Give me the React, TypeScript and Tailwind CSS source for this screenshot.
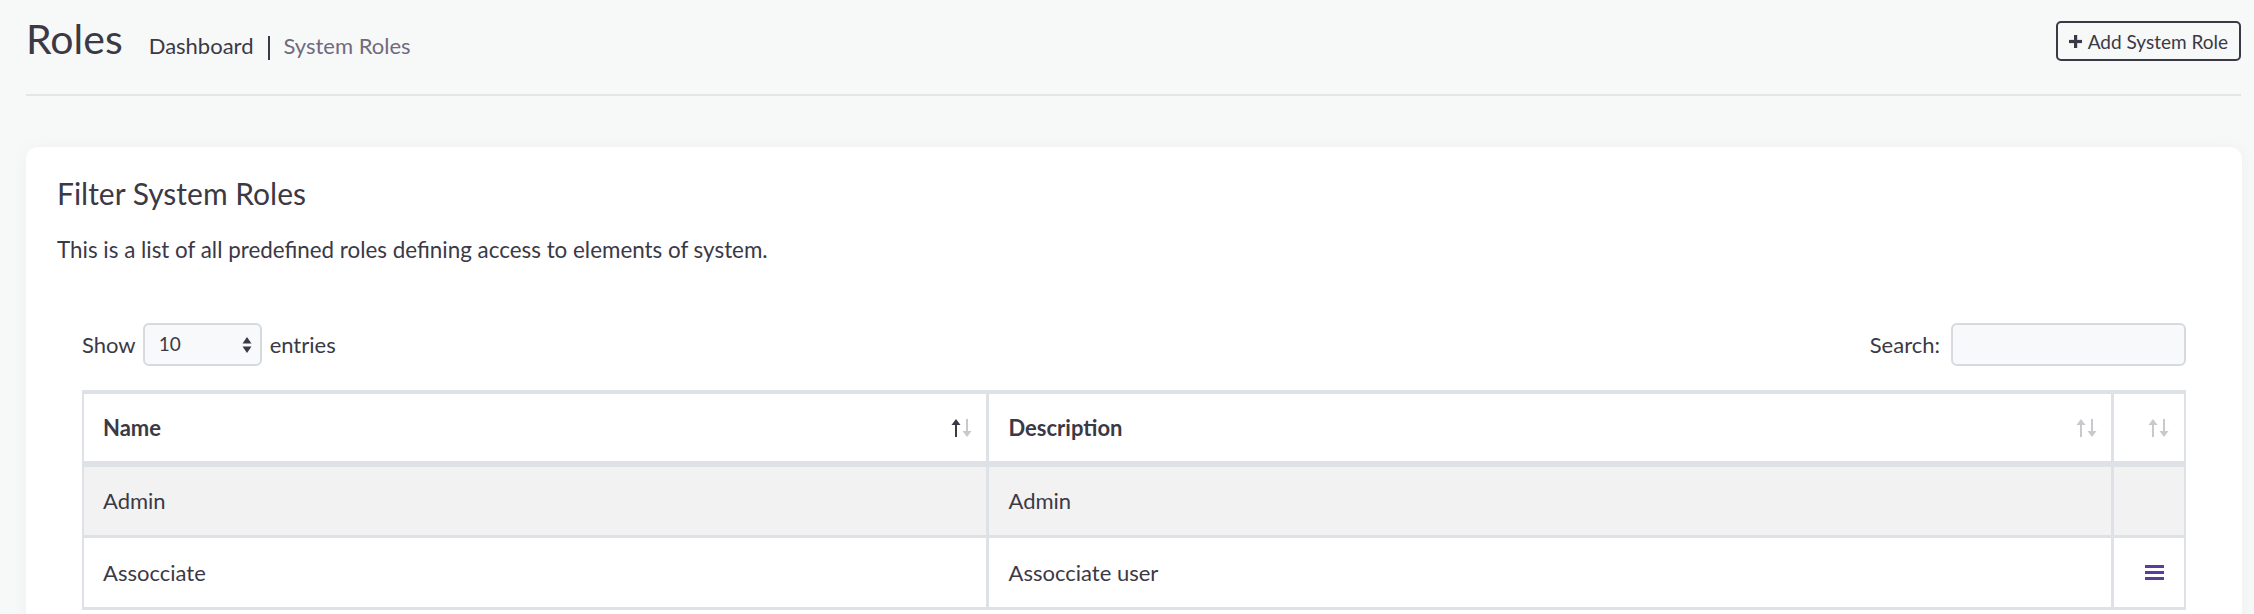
import React from 'react';

// Sort arrows used in the DataTables header (up dark when active)
const SortIcon: React.FC<{ active?: boolean }> = ({ active }) => (
    <svg width="22" height="18" viewBox="0 0 22 18" className="shrink-0">
        <g fill={active ? '#3b3946' : '#c9c9cd'}>
            <rect x="4" y="4" width="2" height="14" />
            <polygon points="5,0 9.5,6 0.5,6" />
        </g>
        <g fill="#c9c9cd">
            <rect x="15" y="0" width="2" height="14" />
            <polygon points="16,18 20.5,12 11.5,12" />
        </g>
    </svg>
);

const rows = [
    { name: 'Admin', description: 'Admin', actions: false },
    { name: 'Assocciate', description: 'Assocciate user', actions: true },
];

const App: React.FC = () => {
    return (
        <div className="min-h-screen bg-[#f7f8f8] pt-[21px] text-[#3b3946] font-['Lato','Open_Sans',sans-serif] overflow-hidden">
            {/* Encabezado de la página */}
            <div className="ml-[26px] mr-[13px] pb-[33px] border-b-2 border-[#e4e4e9] flex items-center justify-between h-[40px] box-content">
                <div className="flex items-baseline -mt-[6px]">
                    <h1 className="text-[41px] leading-none">Roles</h1>
                    <div className="flex items-baseline ml-[26px] text-[22px] leading-none">
                        <span>Dashboard</span>
                        <span className="w-[2px] h-[24px] bg-[#3b3946] mx-[14px] self-center translate-y-[1px]"></span>
                        <span className="text-[#6f6b7d]">System Roles</span>
                    </div>
                </div>
                <button className="h-[40px] px-[11px] flex items-center gap-[6px] border-2 border-[#3b3946] rounded-[5px] text-[19px] leading-none bg-transparent">
                    <svg width="13" height="13" viewBox="0 0 13 13">
                        <rect x="5" y="0" width="3.2" height="13" fill="#3b3946" />
                        <rect x="0" y="4.9" width="13" height="3.2" fill="#3b3946" />
                    </svg>
                    Add System Role
                </button>
            </div>

            {/* Tarjeta principal */}
            <div className="ml-[26px] mr-[12px] mt-[51px] bg-white rounded-[12px] shadow-[0_0_18px_rgba(0,0,0,0.04)] px-[31px] pt-[28px] pb-[40px]">
                <h2 className="text-[30px] leading-[36px]">Filter System Roles</h2>
                <p className="mt-[24px] text-[22.4px] leading-[30px]">
                    This is a list of all predefined roles defining access to elements of system.
                </p>

                <div className="px-[25px] mt-[58px]">
                    <div className="flex items-center justify-between text-[22px]">
                        <div className="flex items-center">
                            <span>Show</span>
                            <div className="ml-[7px] mr-[8px] w-[119px] h-[43px] rounded-[6px] border-2 border-[#d6d9de] bg-[#f8f9fa] flex items-center justify-between pl-[14px] pr-[8px]">
                                <span className="text-[19px]">10</span>
                                <svg width="10" height="16" viewBox="0 0 10 16">
                                    <polygon points="5,0 9.5,6.5 0.5,6.5" fill="#3b3946" />
                                    <polygon points="5,16 9.5,9.5 0.5,9.5" fill="#3b3946" />
                                </svg>
                            </div>
                            <span>entries</span>
                        </div>
                        <div className="flex items-center">
                            <span>Search:</span>
                            <input
                                type="text"
                                className="ml-[11px] w-[235px] h-[43px] rounded-[6px] border-2 border-[#d6d9de] bg-[#f8f9fa] outline-none"
                            />
                        </div>
                    </div>

                    <table className="mt-[24px] w-full border-collapse table-fixed text-[22px]">
                        <colgroup>
                            <col className="w-[904px]" />
                            <col />
                            <col className="w-[73px]" />
                        </colgroup>
                        <thead>
                            <tr className="border-t-4 border-b-[6px] border-x-2 border-[#dee2e6]">
                                <th className="h-[72px] pl-[19px] pr-[13px] text-left font-bold border-r-[3px] border-[#dee2e6]">
                                    <div className="flex items-center justify-between">
                                        <span>Name</span>
                                        <SortIcon active />
                                    </div>
                                </th>
                                <th className="h-[72px] pl-[20px] pr-[13px] text-left font-bold border-r-[3px] border-[#dee2e6]">
                                    <div className="flex items-center justify-between">
                                        <span>Description</span>
                                        <SortIcon />
                                    </div>
                                </th>
                                <th className="h-[72px] pr-[14px]">
                                    <div className="flex justify-end">
                                        <SortIcon />
                                    </div>
                                </th>
                            </tr>
                        </thead>
                        <tbody>
                            {rows.map((row, i) => (
                                <tr
                                    key={row.name}
                                    className={`border-x-2 border-b-[3px] border-[#dee2e6] ${i === 0 ? 'bg-[#f2f2f2]' : 'bg-white'}`}
                                >
                                    <td className="h-[72px] pl-[19px] border-r-[3px] border-[#dee2e6]">{row.name}</td>
                                    <td className="h-[72px] pl-[20px] border-r-[3px] border-[#dee2e6]">{row.description}</td>
                                    <td className="h-[72px] pr-[20px]">
                                        {row.actions && (
                                            <div className="flex justify-end">
                                                <svg width="19" height="15" viewBox="0 0 19 15">
                                                    <rect x="0" y="0" width="19" height="3" fill="#5a3d9a" />
                                                    <rect x="0" y="6" width="19" height="3" fill="#5a3d9a" />
                                                    <rect x="0" y="12" width="19" height="3" fill="#5a3d9a" />
                                                </svg>
                                            </div>
                                        )}
                                    </td>
                                </tr>
                            ))}
                        </tbody>
                    </table>
                </div>
            </div>
        </div>
    );
};

export default App;
